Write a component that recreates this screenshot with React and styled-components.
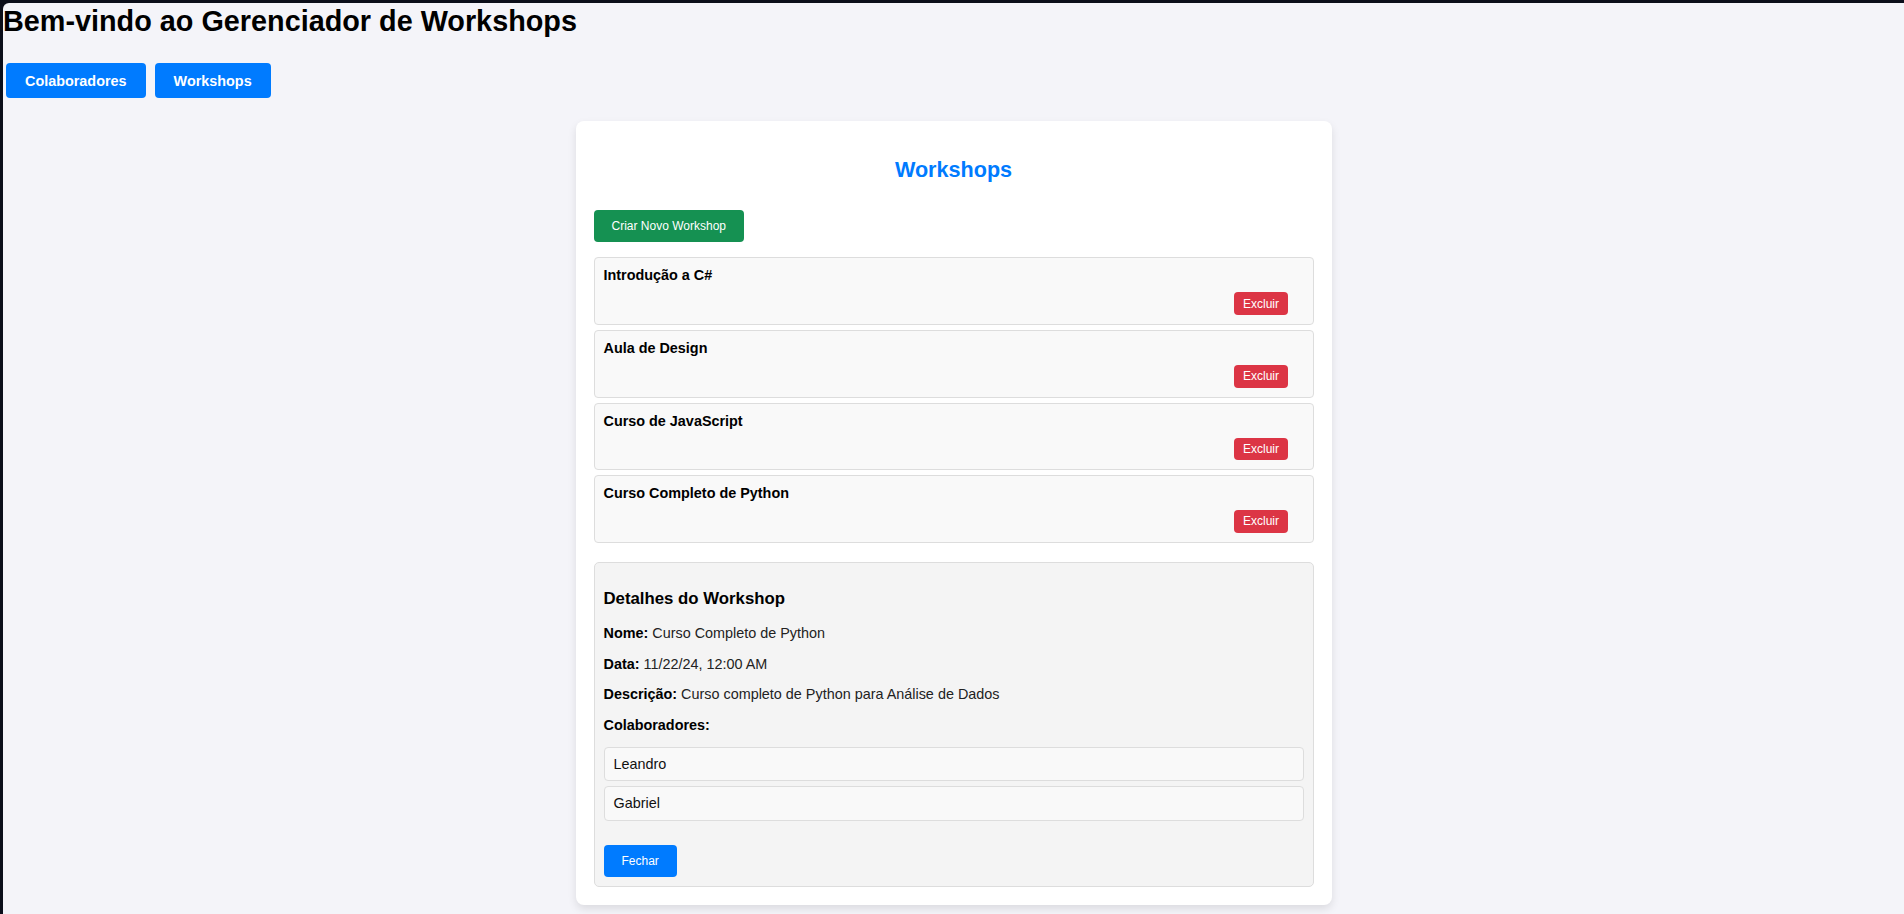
import styled, { createGlobalStyle } from 'styled-components';

const GlobalStyle = createGlobalStyle`
	html, body {
		margin: 0;
		padding: 0;
		background-color: #0b0e1a;
	}
	body {
		font-family: "Liberation Sans", Arial, Helvetica, sans-serif;
		font-size: 14.4px;
		color: #222;
	}
`;

const Page = styled.div`
	margin: 3px 0 0 3px;
	min-height: calc(100vh - 3px);
	background-color: #f4f4f9;
	border-top-left-radius: 6px;
	box-sizing: border-box;
	padding-bottom: 10px;
`;

const Title = styled.h1`
	margin: 0;
	padding-top: 2px;
	font-size: 28.8px;
	font-weight: 700;
	color: #000;
`;

const Nav = styled.nav`
	display: flex;
	gap: 9px;
	padding: 0 3px;
	margin-top: 25px;
`;

const NavButton = styled.button`
	font-family: inherit;
	font-size: 14.4px;
	font-weight: 700;
	color: #fff;
	background-color: #007bff;
	border: none;
	border-radius: 4px;
	padding: 9.7px 19px;
	cursor: pointer;
`;

const Card = styled.main`
	width: 756px;
	box-sizing: border-box;
	margin: 23px auto 0;
	padding: 18px;
	background: #fff;
	border-radius: 8px;
	box-shadow: 0 4px 8px rgba(0, 0, 0, 0.1);
`;

const CardTitle = styled.h2`
	margin: 18px 0 27px;
	text-align: center;
	font-size: 21.6px;
	font-weight: 700;
	color: #007bff;
`;

const Button = styled.button`
	font-family: inherit;
	font-size: 12px;
	color: #fff;
	background-color: ${p => p.$color || '#007bff'};
	border: none;
	border-radius: 4px;
	padding: 9px 18px;
	cursor: pointer;
`;

const List = styled.ul`
	list-style: none;
	margin: 15px 0 0;
	padding: 0;
	display: flex;
	flex-direction: column;
	gap: 5px;
`;

const Item = styled.li`
	background: #f9f9f9;
	border: 1px solid #ddd;
	border-radius: 4px;
	padding: 9px;
`;

const ItemName = styled.div`
	font-size: 14.4px;
	font-weight: 700;
	color: #000;
	margin-bottom: 9px;
`;

const ItemActions = styled.div`
	display: flex;
	justify-content: flex-end;
	padding-right: 16px;
`;

const DeleteButton = styled.button`
	font-family: inherit;
	font-size: 12px;
	color: #fff;
	background-color: #dc3545;
	border: none;
	border-radius: 4px;
	padding: 4.3px 8.5px;
	cursor: pointer;
`;

const Details = styled.section`
	margin-top: 19px;
	background: #f4f4f4;
	border: 1px solid #ddd;
	border-radius: 5px;
	padding: 9px;
`;

const DetailsTitle = styled.h3`
	margin: 16.8px 0;
	font-size: 16.8px;
	font-weight: 700;
	color: #000;
`;

const Line = styled.p`
	margin: 14.4px 0;
	font-size: 14.4px;
	color: #222;

	strong {
		color: #000;
	}
`;

const People = styled.ul`
	list-style: none;
	margin: 14.4px 0;
	padding: 0;
	display: flex;
	flex-direction: column;
	gap: 5px;
`;

const Person = styled.li`
	background: #f9f9f9;
	border: 1px solid #ddd;
	border-radius: 4px;
	padding: 8.2px 9px;
	font-size: 14.4px;
	color: #111;
`;

const CloseRow = styled.div`
	margin-top: 24px;
`;

const workshops = [
	{ id: 1, nome: 'Introdução a C#' },
	{ id: 2, nome: 'Aula de Design' },
	{ id: 3, nome: 'Curso de JavaScript' },
	{ id: 4, nome: 'Curso Completo de Python' },
];

const selected = {
	nome: 'Curso Completo de Python',
	data: '11/22/24, 12:00 AM',
	descricao: 'Curso completo de Python para Análise de Dados',
	colaboradores: ['Leandro', 'Gabriel'],
};

export default function App() {
	return (
		<>
			<GlobalStyle />
			<Page>
				<Title>Bem-vindo ao Gerenciador de Workshops</Title>
				<Nav>
					<NavButton>Colaboradores</NavButton>
					<NavButton>Workshops</NavButton>
				</Nav>
				<Card>
					<CardTitle>Workshops</CardTitle>
					<Button $color="#159152">Criar Novo Workshop</Button>
					<List>
						{workshops.map(w => (
							<Item key={w.id}>
								<ItemName>{w.nome}</ItemName>
								<ItemActions>
									<DeleteButton>Excluir</DeleteButton>
								</ItemActions>
							</Item>
						))}
					</List>
					<Details>
						<DetailsTitle>Detalhes do Workshop</DetailsTitle>
						<Line><strong>Nome:</strong> {selected.nome}</Line>
						<Line><strong>Data:</strong> {selected.data}</Line>
						<Line><strong>Descrição:</strong> {selected.descricao}</Line>
						<Line><strong>Colaboradores:</strong></Line>
						<People>
							{selected.colaboradores.map(c => (
								<Person key={c}>{c}</Person>
							))}
						</People>
						<CloseRow>
							<Button>Fechar</Button>
						</CloseRow>
					</Details>
				</Card>
			</Page>
		</>
	);
}
